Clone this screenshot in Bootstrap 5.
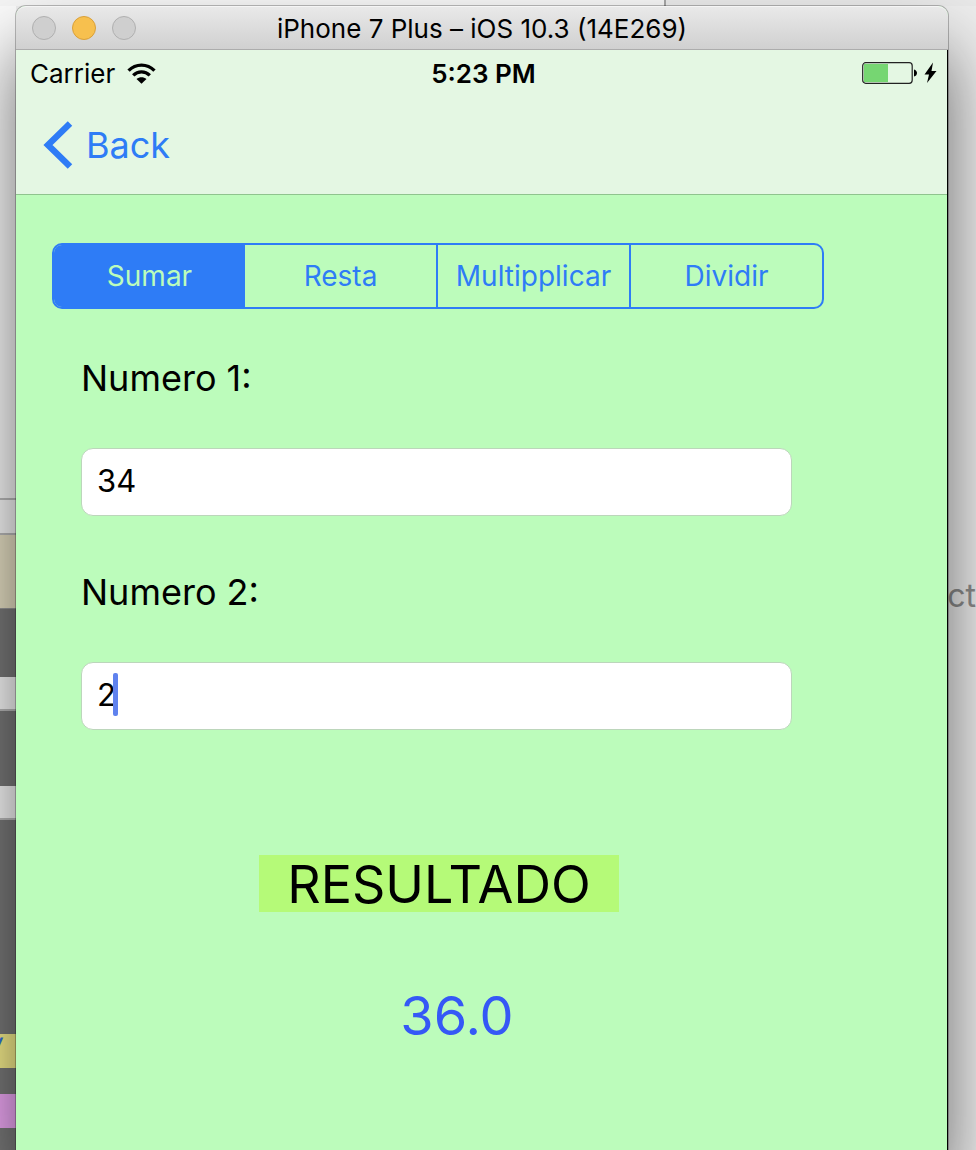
<!DOCTYPE html>
<html lang="es">
<head>
<meta charset="utf-8">
<meta name="viewport" content="width=device-width, initial-scale=1">
<title>iPhone 7 Plus – iOS 10.3 (14E269)</title>
<link href="https://cdn.jsdelivr.net/npm/bootstrap@5.3.0/dist/css/bootstrap.min.css" rel="stylesheet">
<style>
  :root { --ios-blue: #2e7cf6; --mint: #bcfcbb; }
  body { font-family: Inter, "Liberation Sans", sans-serif; color: #000; background: #ededed; }

  /* Windows visible behind the simulator */
  .behind-top { height: 6px; background: #e9e9e9; }
  .behind-top div { width: 666px; border-right: 2px solid #a6a6a6; background: #f5f5f5; }
  .behind-left { width: 16px; background: #7a7a7a; }
  .behind-left div { flex: none; }
  .strip-light { background: #fafafa; border-bottom: 2px solid #bbb; }
  .strip-tan { background: #e9e2c6; border-bottom: 1px solid #999; }
  .strip-yellow { background: #f9f08e; color: #2f6fe0; font-size: 20px; line-height: 24px; font-weight: 700; font-style: italic; }
  .strip-yellow span { margin-left: -6px; }
  .strip-purple { background: #f0a9f7; }
  .behind-right { width: 28px; padding-top: 570px; font-size: 32px; line-height: 40px; color: #8c8c8c; }

  /* Simulator window */
  .sim-window { z-index: 1; min-width: 0; border-radius: 10px 10px 0 0; background: var(--mint);
    box-shadow: 0 0 0 1px rgba(0,0,0,.25), 0 44px 70px rgba(0,0,0,.58); }
  .title-bar { height: 44px; border-radius: 10px 10px 0 0; border-top: 1px solid #f5f5f5; border-bottom: 1px solid #acacac;
    background: linear-gradient(#e9e9e9, #d0d0d0); font-size: 26px; line-height: 44px; }
  .lights { left: 16px; top: 9px; }
  .light-btn { width: 24px; height: 24px; padding: 0; border-radius: 50%; border: 1px solid #b0b0b0; background: #cfcfcf; }
  .light-btn.amber { background: #f7c04e; border-color: #d9a03a; }
  .phone { border-right: 1px solid #000; }
  .top-area { background: #e4f7e3; border-bottom: 1px solid #8fc48e; height: 145px; }
  .status-row { height: 46px; padding: 0 10px 0 14px; font-size: 26px; }
  .back-link { color: var(--ios-blue); font-size: 36px; line-height: 48px; margin: 25px 0 0 27px; gap: 13px; }

  .calc { padding: 48px 123px 100px 36px; }
  .segments { border: 2px solid var(--ios-blue); border-radius: 10px; overflow: hidden; }
  .segments .btn { flex: 1 1 0; height: 62px; padding: 0; border: 0; border-radius: 0; font-size: 28px; color: var(--ios-blue); }
  .segments .btn + .btn { border-left: 2px solid var(--ios-blue); }
  .segments .btn.active { background: var(--ios-blue); color: var(--mint); }
  .segments .btn.active + .btn { border-left: 0; }
  .fields { padding: 0 32px 0 29px; }
  .fields label { font-size: 36px; line-height: 48px; }
  .fields .form-control { height: 68px; padding: 0 15px 4px; border: 1px solid #bcd6bb; border-radius: 12px; font-size: 31px; line-height: 40px; color: #000; background: #fff; }
  .caret-bar { left: 32px; top: 11px; width: 5px; height: 43px; border-radius: 2px; background: #5f82ee; }
  .result-box { padding-left: 2px; }
  .result-label { width: 360px; max-width: 100%; margin: 125px auto 0; padding-top: 3px; font-size: 52px; line-height: 54px; background: #b5fa78; }
  .result-value { margin-top: 72px; padding-left: 36px; font-size: 54px; line-height: 64px; color: #3558f6; }
</style>
</head>
<body>
<div class="min-vh-100 d-flex flex-column overflow-hidden">
  <div class="behind-top d-flex" aria-hidden="true"><div></div></div>
  <div class="d-flex flex-grow-1">
    <div class="behind-left d-flex flex-column flex-shrink-0" aria-hidden="true">
      <div class="strip-light" style="height:494px"></div>
      <div class="strip-light" style="height:35px"></div>
      <div class="strip-tan" style="height:74px"></div>
      <div style="height:68px"></div>
      <div class="strip-light" style="height:34px"></div>
      <div style="height:75px"></div>
      <div class="strip-light" style="height:34px"></div>
      <div style="height:214px"></div>
      <div class="strip-yellow" style="height:34px"><span>/</span></div>
      <div style="height:26px"></div>
      <div class="strip-purple" style="height:34px"></div>
    </div>

    <main class="sim-window position-relative flex-grow-1 d-flex flex-column">
      <header class="title-bar position-relative text-center">
        <div class="lights position-absolute d-flex gap-3">
          <button class="light-btn" type="button" aria-label="Close"></button>
          <button class="light-btn amber" type="button" aria-label="Minimize"></button>
          <button class="light-btn" type="button" aria-label="Zoom"></button>
        </div>
        iPhone 7 Plus – iOS 10.3 (14E269)
      </header>

      <div class="phone flex-grow-1">
        <div class="top-area">
          <div class="status-row d-flex align-items-center">
            <div class="col d-flex align-items-center gap-2">
              Carrier
              <svg class="ms-1" width="29" height="21" viewBox="0 0 28 20" aria-hidden="true">
                <path d="M1.500 7.300C8.500.1 19.500.1 26.500 7.300M6 11.800C10.600 7.300 17.400 7.300 22 11.800" fill="none" stroke="#000" stroke-width="3.200"/>
                <path d="M9.200 15.400C12 12.900 16 12.900 18.800 15.400L14 20z"/>
              </svg>
            </div>
            <div class="fw-semibold">5:23 PM</div>
            <div class="col d-flex justify-content-end">
              <svg width="75" height="22" viewBox="0 0 75 22" aria-hidden="true">
                <rect x=".7" y=".7" width="49.500" height="20.600" rx="3" fill="none" stroke="#222" stroke-width="1.200"/>
                <rect x="2" y="2" width="24" height="18" fill="#76d672"/>
                <path d="M52 7.500C56 8.500 56 13.500 52 14.500z"/>
                <path d="M71 .5L62.500 12.500H67L65 21L74.500 9H69.500z"/>
              </svg>
            </div>
          </div>
          <a href="#" class="back-link d-inline-flex align-items-center text-decoration-none">
            <svg width="30" height="48" viewBox="0 0 30 48" aria-hidden="true"><path d="M27 2.500L5 24L27 45.500" fill="none" stroke="currentColor" stroke-width="6.400"/></svg>
            Back
          </a>
        </div>

        <div class="calc">
          <div class="segments d-flex" role="group" aria-label="Operación">
            <button type="button" class="btn active" aria-pressed="true">Sumar</button>
            <button type="button" class="btn">Resta</button>
            <button type="button" class="btn">Multipplicar</button>
            <button type="button" class="btn">Dividir</button>
          </div>
          <form class="fields">
            <label for="n1" class="d-block" style="margin-top:45px">Numero 1:</label>
            <input id="n1" class="form-control shadow-none" type="text" inputmode="decimal" value="34" style="margin-top:46px">
            <label for="n2" class="d-block" style="margin-top:52px">Numero 2:</label>
            <div class="position-relative" style="margin-top:46px">
              <input id="n2" class="form-control shadow-none" type="text" inputmode="decimal" value="2">
              <span class="caret-bar position-absolute"></span>
            </div>
          </form>
          <div class="result-box text-center">
            <div class="result-label">RESULTADO</div>
            <output class="result-value d-block" for="n1 n2">36.0</output>
          </div>
        </div>
      </div>
    </main>

    <div class="behind-right flex-shrink-0 d-flex justify-content-end align-items-start" aria-hidden="true">ct</div>
  </div>
</div>
<script src="https://cdn.jsdelivr.net/npm/bootstrap@5.3.0/dist/js/bootstrap.bundle.min.js"></script>
</body>
</html>
